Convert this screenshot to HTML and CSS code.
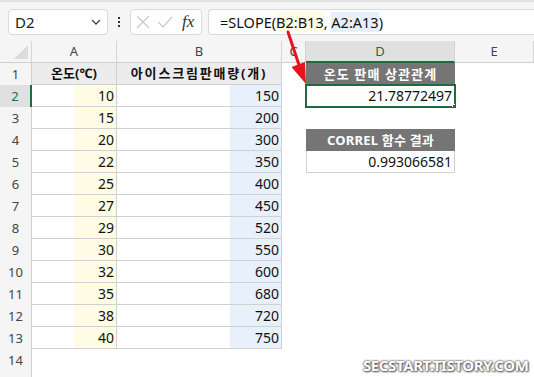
FILE: index.html
```html
<!DOCTYPE html>
<html>
  <head>
    <meta charset="utf-8">
    <title>SLOPE</title>
    <link rel="stylesheet" href="styles.css">
  </head>
  <body>

    <div id="bar">
      <div class="namebox">
        <span>D2</span>
        <svg width="10" height="6" viewBox="0 0 10 6"><path d="M1 1 L5 5 L9 1" fill="none" stroke="#444" stroke-width="1.3"/></svg>
      </div>
      <div class="dots"><i></i><i></i><i></i></div>
      <div class="fxbox">
        <svg width="14" height="14" viewBox="0 0 14 14"><path d="M1 1 L13 13 M13 1 L1 13" stroke="#c8c8c8" stroke-width="1.2"/></svg>
        <svg width="16" height="14" viewBox="0 0 16 14"><path d="M1 7 L6 12 L15 2" fill="none" stroke="#c8c8c8" stroke-width="1.2"/></svg>
        <span class="fx">fx</span>
      </div>
      <div class="formula">=SLOPE(<span class="ry">B2:B13</span>, <span class="rb">A2:A13</span>)</div>
    </div>

    <div id="sheet">
      <div class="corner"><svg width="14" height="14" viewBox="0 0 14 14"><path d="M14 0 L14 14 L0 14 Z" fill="#dcdcdc"/></svg></div>
      <div class="colhead">A</div>
      <div class="colhead">B</div>
      <div class="colhead">C</div>
      <div class="colhead sel">D</div>
      <div class="colhead">E</div>

      <div class="rowhead">1</div>
      <div class="cell head">온도(℃)</div>
      <div class="cell head wide">아이스크림판매량(개)</div>
      <div class="empty"></div>
      <div class="cell dark wide">온도 판매 상관관계</div>
      <div class="empty"></div>

      <div class="rowhead sel">2</div>
      <div class="cell num ya"><span>10</span></div>
      <div class="cell num bb"><span>150</span></div>
      <div class="empty"></div>
      <div class="cell num active">21.78772497</div>
      <div class="empty"></div>

      <div class="rowhead">3</div>
      <div class="cell num ya"><span>15</span></div>
      <div class="cell num bb"><span>200</span></div>
      <div class="empty"></div>
      <div class="empty"></div>
      <div class="empty"></div>

      <div class="rowhead">4</div>
      <div class="cell num ya"><span>20</span></div>
      <div class="cell num bb"><span>300</span></div>
      <div class="empty"></div>
      <div class="cell dark">CORREL 함수 결과</div>
      <div class="empty"></div>

      <div class="rowhead">5</div>
      <div class="cell num ya"><span>22</span></div>
      <div class="cell num bb"><span>350</span></div>
      <div class="empty"></div>
      <div class="cell num boxed">0.993066581</div>
      <div class="empty"></div>

      <div class="rowhead">6</div>
      <div class="cell num ya"><span>25</span></div>
      <div class="cell num bb"><span>400</span></div>
      <div class="empty"></div><div class="empty"></div><div class="empty"></div>

      <div class="rowhead">7</div>
      <div class="cell num ya"><span>27</span></div>
      <div class="cell num bb"><span>450</span></div>
      <div class="empty"></div><div class="empty"></div><div class="empty"></div>

      <div class="rowhead">8</div>
      <div class="cell num ya"><span>29</span></div>
      <div class="cell num bb"><span>520</span></div>
      <div class="empty"></div><div class="empty"></div><div class="empty"></div>

      <div class="rowhead">9</div>
      <div class="cell num ya"><span>30</span></div>
      <div class="cell num bb"><span>550</span></div>
      <div class="empty"></div><div class="empty"></div><div class="empty"></div>

      <div class="rowhead">10</div>
      <div class="cell num ya"><span>32</span></div>
      <div class="cell num bb"><span>600</span></div>
      <div class="empty"></div><div class="empty"></div><div class="empty"></div>

      <div class="rowhead">11</div>
      <div class="cell num ya"><span>35</span></div>
      <div class="cell num bb"><span>680</span></div>
      <div class="empty"></div><div class="empty"></div><div class="empty"></div>

      <div class="rowhead">12</div>
      <div class="cell num ya"><span>38</span></div>
      <div class="cell num bb"><span>720</span></div>
      <div class="empty"></div><div class="empty"></div><div class="empty"></div>

      <div class="rowhead">13</div>
      <div class="cell num ya"><span>40</span></div>
      <div class="cell num bb"><span>750</span></div>
      <div class="empty"></div><div class="empty"></div><div class="empty"></div>

      <div class="rowhead">14</div>
      <div class="empty"></div><div class="empty"></div><div class="empty"></div><div class="empty"></div><div class="empty"></div>

      <div class="rowhead"></div>
    </div>

    <!-- red pointer from the formula to D2 -->
    <svg class="arrow" width="534" height="377" viewBox="0 0 534 377">
      <path d="M288 32 L300 68" stroke="#e4161c" stroke-width="3" stroke-linecap="round"/>
      <path d="M306 84 L305 62 L291.5 67 Z" fill="#e4161c"/>
    </svg>

    <div class="mark">SECSTART.TISTORY.COM</div>

  </body>
</html>
```

FILE: styles.css
```css
body{
  margin: 0;
  font-family: "Noto Sans", "Noto Sans CJK KR", sans-serif;
  background: #fff;
  width: 534px;
  height: 377px;
  overflow: hidden;
  position: relative;
}

#bar{
  height: 41px;
  box-sizing: border-box;
  background: #f5f5f5;
  border-top: 2px solid #e2e2e2;
  display: flex;
  align-items: flex-start;
  padding: 7px 0 0 8px;
}

.namebox{
  width: 100px;
  height: 26px;
  box-sizing: border-box;
  background: #fff;
  border: 1px solid #dadada;
  border-radius: 4px;
  display: flex;
  align-items: center;
  justify-content: space-between;
  padding: 0 6px 0 6px;
  font-size: 15px;
  color: #222;
}

.dots{
  width: 22px;
  height: 26px;
  display: flex;
  flex-direction: column;
  align-items: center;
  justify-content: center;
  gap: 2px;
}

.dots i{
  width: 2px;
  height: 2px;
  background: #333;
}

.fxbox{
  width: 72px;
  height: 26px;
  box-sizing: border-box;
  background: #fff;
  border: 1px solid #dadada;
  border-radius: 4px;
  display: flex;
  align-items: center;
  padding-left: 5px;
  gap: 7px;
}

.fx{
  font-family: "Liberation Serif", serif;
  font-style: italic;
  font-size: 17px;
  color: #333;
  margin-left: 2px;
}

.formula{
  margin-left: 6px;
  flex: 1;
  height: 26px;
  box-sizing: border-box;
  background: #fff;
  border: 1px solid #dadada;
  border-right: none;
  border-radius: 4px 0 0 4px;
  font-size: 14.5px;
  line-height: 24px;
  padding-left: 11px;
  color: #111;
}

.ry{ background: #fffbe6; }
.rb{ background: #e6f0fb; }

#sheet{
  display: grid;
  grid-template-columns: 32px 85px 165px 24px 149px 79px;
  grid-auto-rows: 22px;
}

.corner{
  background: #f5f5f5;
  border-right: 1px solid #d4d4d4;
  border-bottom: 1px solid #cfcfcf;
  display: flex;
  align-items: flex-end;
  justify-content: flex-end;
  padding: 0 3px 3px 0;
}

.colhead{
  background: #f5f5f5;
  border-right: 1px solid #d4d4d4;
  border-bottom: 1px solid #cfcfcf;
  font-size: 13px;
  color: #444;
  text-align: center;
  line-height: 21px;
}

.colhead.sel{
  background: #e0e0e0;
  color: #1e6b3f;
  border-bottom: 2px solid #1e6b3f;
}

.rowhead{
  background: #f5f5f5;
  border-right: 1px solid #d0d0d0;
  font-size: 13px;
  color: #444;
  text-align: center;
  line-height: 22px;
}

.rowhead.sel{
  background: #e0e0e0;
  color: #1e6b3f;
  border-right: 2px solid #1e6b3f;
}

.cell, .rowhead, .colhead, .corner, .empty{
  box-sizing: border-box;
}

.cell{
  border-right: 1px solid #d0d0d0;
  border-bottom: 1px solid #d0d0d0;
  font-size: 14px;
  line-height: 21px;
  color: #111;
  white-space: nowrap;
  overflow: hidden;
}

.head{
  background: #ececec;
  font-weight: bold;
  font-size: 13px;
  text-align: center;
}

.dark{
  background: #757575;
  color: #fff;
  font-weight: bold;
  font-size: 13px;
  text-align: center;
  border: 1px solid #757575;
  letter-spacing: 0.2px;
}

.head.wide{
  letter-spacing: 1.8px;
}

.dark.wide{
  letter-spacing: 1.1px;
}

.num{
  display: flex;
  justify-content: flex-end;
}

.num span{
  display: block;
  text-align: right;
  padding-right: 2px;
}

.ya span{
  width: 40px;
  background: #fffce6;
}

.bb span{
  width: 49px;
  background: #e7f0fb;
}

.boxed{
  border: 1px solid #d0d0d0;
  border-top: none;
  padding-right: 2px;
}

.active{
  position: relative;
  outline: 2px solid #1e6b3f;
  outline-offset: -1px;
  border: none;
  padding-right: 3px;
  line-height: 22px;
}

.active::after{
  content: "";
  position: absolute;
  right: -4px;
  bottom: -4px;
  width: 5px;
  height: 5px;
  background: #1e6b3f;
  border: 1px solid #fff;
}

.arrow{
  position: absolute;
  left: 0;
  top: 0;
}

.mark{
  position: absolute;
  left: 363px;
  top: 355px;
  font-size: 15px;
  font-weight: bold;
  letter-spacing: -0.4px;
  color: #fff;
  text-shadow: 0 0 2px #555, 0 0 2px #555, 1px 1px 2px #666;
}
```
